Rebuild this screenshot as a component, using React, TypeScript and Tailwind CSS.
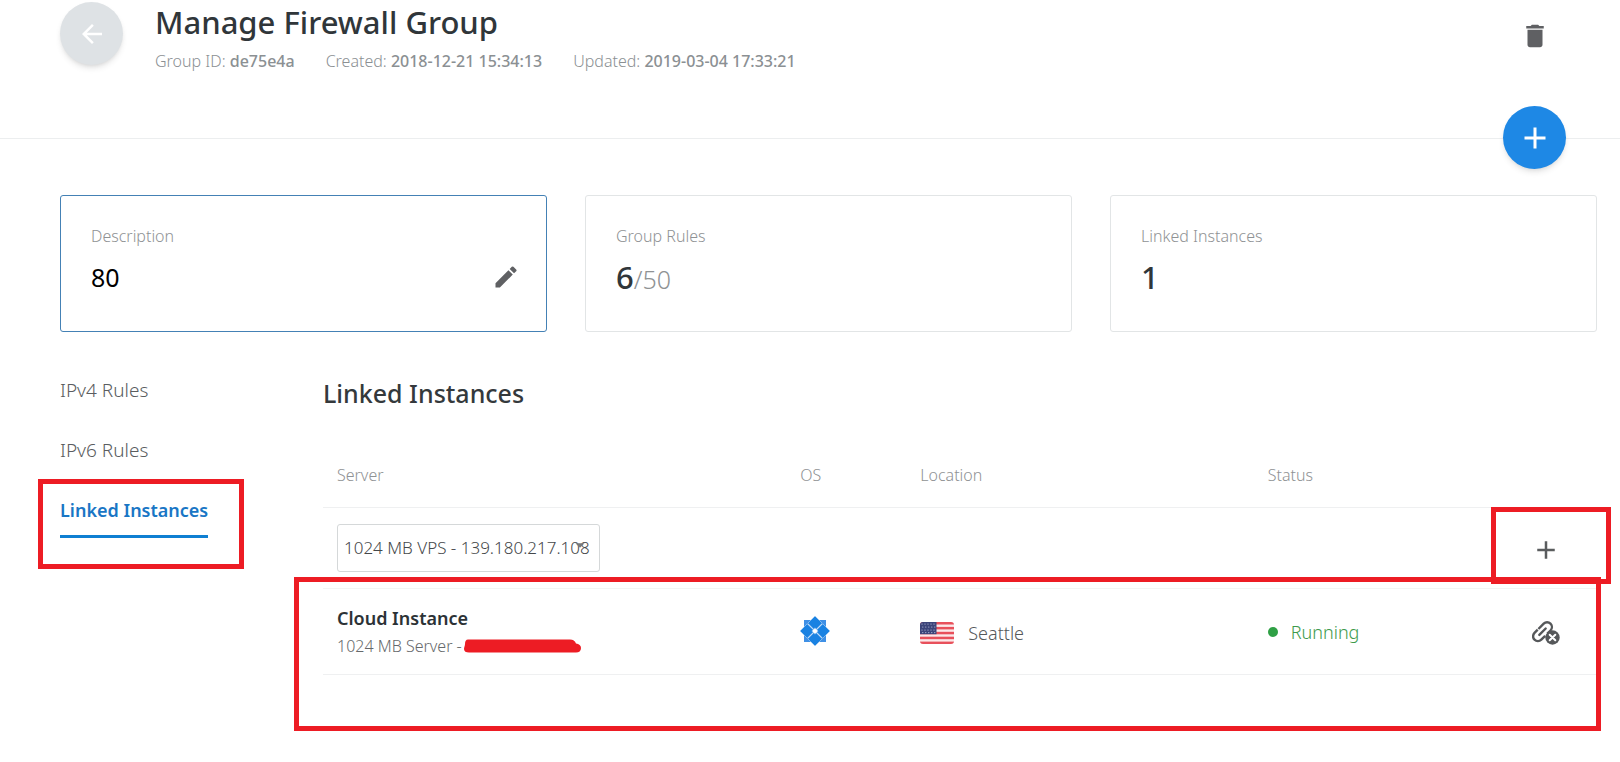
import React, { useState } from 'react';
import { MdAdd, MdArrowBack, MdArrowDropDown, MdDelete, MdEdit } from 'react-icons/md';

interface NavItem {
  id: string;
  label: string;
}

const navItems: NavItem[] = [
  { id: 'ipv4', label: 'IPv4 Rules' },
  { id: 'ipv6', label: 'IPv6 Rules' },
  { id: 'linked', label: 'Linked Instances' },
];

const FlagIcon = () => (
  <svg width="34" height="22" viewBox="0 0 34 22" aria-hidden="true">
    <defs>
      <clipPath id="flag-clip">
        <rect width="34" height="22" rx="3" />
      </clipPath>
    </defs>
    <g clipPath="url(#flag-clip)">
      <rect width="34" height="22" fill="#fbe9ea" />
      {[0, 1, 2, 3, 4].map((i) => (
        <rect key={i} y={i * 4.9} width="34" height="2.5" fill="#e8505b" />
      ))}
      <rect width="16.5" height="12.2" fill="#3c4479" />
      {[2, 5, 8, 10.6].map((y, row) =>
        [2, 5, 8, 11, 14].map((x) => (
          <circle key={`${x}-${y}`} cx={row % 2 ? x + 0.8 : x} cy={y} r="0.6" fill="#c3c6e0" />
        ))
      )}
    </g>
  </svg>
);

const CloudOsIcon = () => (
  <svg width="30" height="30" viewBox="0 0 30 30" aria-hidden="true">
    <path d="M4 4h22v22H4z" fill="#3f90e6" />
    <g fill="#1a82e2" stroke="#b9d7f7" strokeWidth="0.6">
      <path d="M15 0l7.200 7.200-7.200 7.200-7.200-7.200z" />
      <path d="M15 30l7.200-7.200-7.200-7.200-7.200 7.200z" />
      <path d="M0 15l7.200-7.200 7.200 7.200-7.200 7.200z" />
      <path d="M30 15l-7.200-7.200-7.200 7.200 7.200 7.200z" />
    </g>
    <path d="M8 8l14 14M22 8L8 22" stroke="#d5e6fa" strokeWidth="0.8" />
    <path d="M15 11.5l1.2 2.3 2.3 1.2-2.3 1.2-1.2 2.3-1.2-2.3-2.3-1.2 2.3-1.2z" fill="#fff" />
  </svg>
);

const UnlinkIcon = () => (
  <svg width="28" height="24" viewBox="0 0 28 24" fill="none" aria-hidden="true">
    <g transform="translate(10.5 10.7) rotate(-45)" stroke="#56585a" strokeWidth="2.4">
      <path d="M-2 -4.8H-6.500a4.800 4.800 0 0 0 0 9.600H-1" />
      <path d="M-1 -4.8H6.500a4.800 4.800 0 0 1 0 9.600H2" />
      <path d="M-4.5 0H4.5" strokeLinecap="round" />
    </g>
    <circle cx="20.5" cy="16.5" r="7.2" fill="#56585a" />
    <path d="M17.7 13.7l5.6 5.6M23.3 13.7l-5.6 5.6" stroke="#fff" strokeWidth="2" strokeLinecap="round" />
  </svg>
);

// brush stroke that hides the IP address
const Redaction = () => (
  <svg width="117" height="14" viewBox="0 0 117 14" className="ml-[2px]" aria-hidden="true">
    <path d="M4 0.5H106c3 0 5 1.5 6 4 3 0.500 5 2 5 4.500 0 3-2 4.500-5 4.500H5c-3 0-5-1-5-3.500 0-2 1-3 1-5C1 2 2 0.500 4 0.500z" fill="#ed1c24" />
  </svg>
);

const Highlight: React.FC<{ className: string }> = ({ className }) => (
  <div className={`absolute pointer-events-none border-[5px] border-[#ed1c24] ${className}`} />
);

const Header = () => (
  <header className="relative flex items-start border-b border-[#eceeef] pt-[2px] pr-[54px] pb-[65px] pl-[60px]">
    <button
      aria-label="Back"
      className="flex size-[63px] shrink-0 items-center justify-center rounded-full bg-[#dee2e5] text-white shadow-md"
    >
      <MdArrowBack size={30} />
    </button>
    <div className="ml-8 grow">
      <h1 className="text-[31px] leading-10 font-medium text-[#30363a]">Manage Firewall Group</h1>
      <div className="mt-[7px] flex gap-[31px] text-base leading-6 text-[#8b9093]">
        <p className="font-light">Group ID: <b className="font-medium">de75e4a</b></p>
        <p className="font-light">Created: <b className="font-medium">2018-12-21 15:34:13</b></p>
        <p className="font-light">Updated: <b className="font-medium">2019-03-04 17:33:21</b></p>
      </div>
    </div>
    <button aria-label="Delete group" className="mt-[2px] flex size-[63px] items-center justify-center text-[#5f6063]">
      <MdDelete size={30} />
    </button>
    <button
      aria-label="Add"
      className="absolute right-[54px] -bottom-[31px] flex size-[63px] items-center justify-center rounded-full bg-[#1e88e5] text-white shadow-md"
    >
      <MdAdd size={36} />
    </button>
  </header>
);

const cardClass = 'rounded-[3px] border px-[30px] pt-7 pb-[34px]';
const cardLabelClass = 'block text-base leading-6 font-light text-[#8f9294]';

const Cards = () => {
  const [description, setDescription] = useState('80');

  return (
    <section className="grid grid-cols-3 gap-[38px]">
      <div className={`${cardClass} border-[#4481b5]`}>
        <label htmlFor="description" className={cardLabelClass}>Description</label>
        <div className="mt-[9px] -mr-1 flex h-10 items-center">
          <input
            id="description"
            value={description}
            onChange={(e) => setDescription(e.target.value)}
            className="min-w-0 grow text-[25px] leading-10 text-black outline-none"
          />
          <button aria-label="Edit description" className="text-[#5f6063]">
            <MdEdit size={28} />
          </button>
        </div>
      </div>
      <div className={`${cardClass} border-[#e2e5e6]`}>
        <span className={cardLabelClass}>Group Rules</span>
        <p className="mt-[9px] text-[31px] leading-10 font-medium text-[#30363a]">
          6<span className="text-[25px] leading-none font-light text-[#8f9294]">/50</span>
        </p>
      </div>
      <div className={`${cardClass} border-[#e2e5e6]`}>
        <span className={cardLabelClass}>Linked Instances</span>
        <p className="mt-[9px] text-[31px] leading-10 font-medium text-[#30363a]">1</p>
      </div>
    </section>
  );
};

const InstancesTable = () => (
  <div className="relative mt-[30px]">
    <table className="w-full table-fixed text-left">
      <thead>
        <tr className="h-16 border-b border-[#eff0f1] text-base text-[#8f9294]">
          <th className="w-4/11 pl-[14px] font-light">Server</th>
          <th className="w-[120px] pl-[14px] font-light">OS</th>
          <th className="w-3/11 pl-[14px] font-light">Location</th>
          <th className="pl-[14px] font-light">Status</th>
          <th className="w-[103px]" aria-label="Actions" />
        </tr>
      </thead>
      <tbody>
        <tr className="h-[81px] border-b border-[#f3f4f4]">
          <td colSpan={4} className="pl-[14px]">
            <div className="relative w-[263px]">
              <select
                aria-label="Server to link"
                className="block h-12 w-full appearance-none rounded-[3px] border border-[#d5d8d9] bg-white px-[6px] text-[17px] font-light text-[#45484a]"
              >
                <option>1024 MB VPS - 139.180.217.108</option>
              </select>
              <MdArrowDropDown size={22} className="pointer-events-none absolute top-[10px] right-[9px] text-[#77797b]" />
            </div>
          </td>
          <td className="pt-1">
            <button aria-label="Link server" className="mx-auto block text-[#5a5c5e]">
              <MdAdd size={30} />
            </button>
          </td>
        </tr>
        <tr className="h-[86px] border-b border-[#eff0f1]">
          <td className="pt-[2px] pl-[14px]">
            <p className="text-lg leading-7 font-semibold text-[#2c3236]">Cloud Instance</p>
            <p className="flex items-center text-base leading-7 font-light whitespace-nowrap text-[#66696b]">
              1024 MB Server -<Redaction />
            </p>
          </td>
          <td className="pl-[14px]"><CloudOsIcon /></td>
          <td className="pt-1 pl-[14px]">
            <div className="flex items-center gap-[14px] text-lg font-light text-[#55585a]">
              <FlagIcon />
              Seattle
            </div>
          </td>
          <td className="pt-[2px] pl-[14px]">
            <div className="flex items-center gap-[13px] text-lg font-light text-[#3c9a4b]">
              <span className="size-[10px] rounded-full bg-[#2fa045]" />
              Running
            </div>
          </td>
          <td className="pt-1">
            <button aria-label="Unlink instance" className="mx-auto block">
              <UnlinkIcon />
            </button>
          </td>
        </tr>
      </tbody>
    </table>
    <Highlight className="top-16 -right-[14px] h-[77px] w-[120px]" />
    <Highlight className="top-[134px] -right-1 -left-[29px] h-[154px]" />
  </div>
);

export default function App() {
  const [active, setActive] = useState('linked');

  return (
    <div className="bg-white font-['Noto_Sans',sans-serif]">
      <Header />
      <main className="pt-14 pr-[23px] pb-20 pl-[60px]">
        <Cards />
        <div className="mt-7 flex">
          <nav className="w-[263px] shrink-0">
            <ul>
              {navItems.map((item) => (
                <li key={item.id} className="relative h-[60px]">
                  <a
                    href={`#${item.id}`}
                    onClick={() => setActive(item.id)}
                    className={
                      active === item.id
                        ? 'inline-block h-[58px] border-b-[3px] border-[#0f7fd2] text-lg leading-[60px] font-semibold text-[#1976c5]'
                        : 'inline-block text-[19px] leading-[60px] font-light text-[#5a5d60]'
                    }
                  >
                    {item.label}
                  </a>
                  {active === item.id && <Highlight className="-top-px -left-[22px] h-[90px] w-[206px]" />}
                </li>
              ))}
            </ul>
          </nav>
          <section className="min-w-0 grow pt-[13px]">
            <h2 className="text-[25px] leading-10 font-medium text-[#34393c]">Linked Instances</h2>
            <InstancesTable />
          </section>
        </div>
      </main>
    </div>
  );
}
